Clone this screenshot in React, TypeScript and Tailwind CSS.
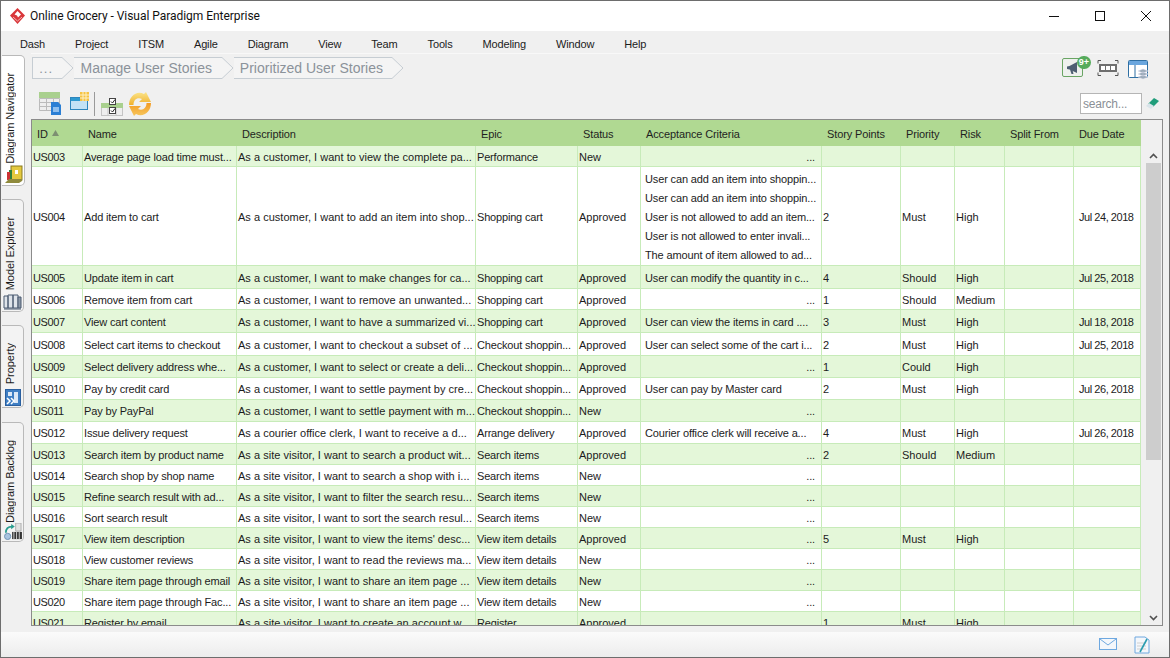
const cols = "grid grid-cols-[51px_154px_239px_102px_63px_181px_79px_54px_50px_69px_67px]"

const headers = ["ID", "Name", "Description", "Epic", "Status", "Acceptance Criteria", "Story Points", "Priority", "Risk", "Split From", "Due Date"]

type Story = {
  id: string
  name: string
  desc: string
  epic: string
  status: string
  ac: string[]
  points?: string
  priority?: string
  risk?: string
  due?: string
  h: string
}

const stories: Story[] = [
  { id: "US003", name: "Average page load time must...", desc: "As a customer, I want to view the complete pa...", epic: "Performance", status: "New", ac: [], h: "h-[21px]" },
  {
    id: "US004", name: "Add item to cart", desc: "As a customer, I want to add an item into shop...", epic: "Shopping cart", status: "Approved",
    ac: ["User can add an item into shoppin...", "User can add an item into shoppin...", "User is not allowed to add an item...", "User is not allowed to enter invali...", "The amount of item allowed to ad..."],
    points: "2", priority: "Must", risk: "High", due: "Jul 24, 2018", h: "h-[99px]",
  },
  { id: "US005", name: "Update item in cart", desc: "As a customer, I want to make changes for ca...", epic: "Shopping cart", status: "Approved", ac: ["User can modify the quantity in c..."], points: "4", priority: "Should", risk: "High", due: "Jul 25, 2018", h: "h-[23px]" },
  { id: "US006", name: "Remove item from cart", desc: "As a customer, I want to remove an unwanted...", epic: "Shopping cart", status: "Approved", ac: [], points: "1", priority: "Should", risk: "Medium", h: "h-[21px]" },
  { id: "US007", name: "View cart content", desc: "As a customer, I want to have a summarized vi...", epic: "Shopping cart", status: "Approved", ac: ["User can view the items in card ...."], points: "3", priority: "Must", risk: "High", due: "Jul 18, 2018", h: "h-[23px]" },
  { id: "US008", name: "Select cart items to checkout", desc: "As a customer, I want to checkout a subset of ...", epic: "Checkout shoppin...", status: "Approved", ac: ["User can select some of the cart i..."], points: "2", priority: "Must", risk: "High", due: "Jul 25, 2018", h: "h-[23px]" },
  { id: "US009", name: "Select delivery address whe...", desc: "As a customer, I want to select or create a deli...", epic: "Checkout shoppin...", status: "Approved", ac: [], points: "1", priority: "Could", risk: "High", h: "h-[22px]" },
  { id: "US010", name: "Pay by credit card", desc: "As a customer, I want to settle payment by cre...", epic: "Checkout shoppin...", status: "Approved", ac: ["User can pay by Master card"], points: "2", priority: "Must", risk: "High", due: "Jul 26, 2018", h: "h-[22px]" },
  { id: "US011", name: "Pay by PayPal", desc: "As a customer, I want to settle payment with m...", epic: "Checkout shoppin...", status: "New", ac: [], h: "h-[22px]" },
  { id: "US012", name: "Issue delivery request", desc: "As a courier office clerk, I want to receive a d...", epic: "Arrange delivery", status: "Approved", ac: ["Courier office clerk will receive a..."], points: "4", priority: "Must", risk: "High", due: "Jul 26, 2018", h: "h-[22px]" },
  { id: "US013", name: "Search item by product name", desc: "As a site visitor, I want to search a product wit...", epic: "Search items", status: "Approved", ac: [], points: "2", priority: "Should", risk: "Medium", h: "h-[21px]" },
  { id: "US014", name: "Search shop by shop name", desc: "As a site visitor, I want to search a shop with i...", epic: "Search items", status: "New", ac: [], h: "h-[21px]" },
  { id: "US015", name: "Refine search result with ad...", desc: "As a site visitor, I want to filter the search resu...", epic: "Search items", status: "New", ac: [], h: "h-[21px]" },
  { id: "US016", name: "Sort search result", desc: "As a site visitor, I want to sort the search resul...", epic: "Search items", status: "New", ac: [], h: "h-[21px]" },
  { id: "US017", name: "View item description", desc: "As a site visitor, I want to view the items' desc...", epic: "View item details", status: "Approved", ac: [], points: "5", priority: "Must", risk: "High", h: "h-[21px]" },
  { id: "US018", name: "View customer reviews", desc: "As a site visitor, I want to read the reviews ma...", epic: "View item details", status: "New", ac: [], h: "h-[21px]" },
  { id: "US019", name: "Share item page through email", desc: "As a site visitor, I want to share an item page ...", epic: "View item details", status: "New", ac: [], h: "h-[21px]" },
  { id: "US020", name: "Share item page through Fac...", desc: "As a site visitor, I want to share an item page ...", epic: "View item details", status: "New", ac: [], h: "h-[21px]" },
  { id: "US021", name: "Register by email", desc: "As a site visitor, I want to create an account w...", epic: "Register", status: "Approved", ac: [], points: "1", priority: "Must", risk: "High", h: "h-[21px]" },
]

const cell = "flex items-center overflow-hidden whitespace-nowrap border-r border-b border-[#c7ebb9] pl-[1px] pt-[2px]"

function Chevron() {
  return (
    <svg width="13" height="22" viewBox="0 0 13 22" className="shrink-0">
      <path d="M0 .5 L1 .5 L12 11 L1 21.5 L0 21.5 Z" fill="#f4f4f4" stroke="none" />
      <path d="M0 .5 L1 .5 L12 11 L1 21.5 L0 21.5" fill="none" stroke="#c6cdd3" />
    </svg>
  )
}

function RailTab({ label, h, active, children }: { label: string; h: string; active?: boolean; children: React.ReactNode }) {
  return (
    <div className={`${h} ${active ? "w-[23px] bg-white" : "w-[22px] bg-[#f3f3f3]"} flex flex-col items-center justify-between rounded-r-[5px] border border-l-0 border-[#b9b9b9] pt-[17px] pb-[1px]`}>
      <span className="mr-[6px] rotate-180 whitespace-nowrap text-[11px] leading-[14px] tracking-[-0.05px] text-[#1a1a1a] [writing-mode:vertical-rl]">{label}</span>
      {children}
    </div>
  )
}

export default function App() {
  return (
    <div className="flex h-[658px] w-[1170px] flex-col overflow-hidden border border-[#6d6d6d] bg-[#f0f0f0] font-['Liberation_Sans',sans-serif] text-[11px] text-[#1c1c1c]">
      {/* title bar */}
      <div className="flex h-[30px] shrink-0 items-center bg-white pl-[9px]">
        <svg width="15" height="16" viewBox="0 0 15 16">
          <path d="M7.5 0 L15 7.5 L7.5 16 L0 7.5 Z" fill="#d9363a" />
          <path d="M7.5 3 L11 6.5 L8 9.5 L7 7.5 L4.5 6.5 Z" fill="#fff" />
          <path d="M3 9 L7.5 13 L12 9" fill="none" stroke="#f3b5b5" strokeWidth="1" />
        </svg>
        <span className="ml-[5px] font-['Roboto',sans-serif] text-[12px] tracking-[-0.04px] text-[#111]">Online Grocery - Visual Paradigm Enterprise</span>
        <div className="ml-auto flex items-center">
          <svg width="46" height="12" viewBox="0 0 46 12">
            <path d="M18 6.5 H28" stroke="#111" />
          </svg>
          <svg width="46" height="12" viewBox="0 0 46 12">
            <rect x="18.5" y="1.5" width="9" height="9" fill="none" stroke="#111" />
          </svg>
          <svg width="46" height="12" viewBox="0 0 46 12">
            <path d="M18 1 L28 11 M28 1 L18 11" stroke="#111" />
          </svg>
        </div>
      </div>

      {/* menu bar */}
      <div className="flex h-[22px] shrink-0 items-center gap-[30px] pl-[19px] pt-[4px] tracking-[-0.15px]">
        {["Dash", "Project", "ITSM", "Agile", "Diagram", "View", "Team", "Tools", "Modeling", "Window", "Help"].map((m) => (
          <span key={m}>{m}</span>
        ))}
      </div>

      <div className="flex min-h-0 flex-1">
        {/* left rail */}
        <div className="flex w-[30px] shrink-0 flex-col pt-[2px] pl-[1px]">
          <RailTab label="Diagram Navigator" h="h-[131px]" active>
            <svg width="19" height="19" viewBox="0 0 19 19">
              <rect x="7" y="1" width="11" height="14" fill="#e4c93f" stroke="#8a7a20" />
              <rect x="11" y="5" width="3" height="4" fill="#fff" />
              <rect x="5" y="5" width="3" height="10" fill="#2f7f3a" />
              <rect x="3" y="7" width="3" height="8" fill="#c33" />
              <path d="M1 18 L5 14 H18 V16 L15 18 Z" fill="#8f8a3c" />
            </svg>
          </RailTab>
          <div className="mt-[13px]">
            <RailTab label="Model Explorer" h="h-[113px]">
              <svg width="19" height="17" viewBox="0 0 19 17">
                <path d="M1 3 H5 V15 H1 Z M5 2 H10 V15 H5 Z M10 2 H15 V15 H10 Z" fill="#dfe4ea" stroke="#4a5a70" />
                <path d="M15 4 H18 V15 H15 Z" fill="#8d99a8" stroke="#4a5a70" />
                <path d="M1 16 H18" stroke="#4a5a70" />
              </svg>
            </RailTab>
          </div>
          <div className="mt-[13px]">
            <RailTab label="Property" h="h-[83px]">
              <svg width="16" height="17" viewBox="0 0 16 17">
                <rect x=".5" y=".5" width="15" height="16" fill="#3f7fc4" stroke="#2a5f9f" />
                <rect x="3" y="3" width="4" height="4" fill="#dce9f7" />
                <rect x="9" y="3" width="4" height="11" fill="#dce9f7" />
                <path d="M2 9 L5 12 L2 15 M6 9 L9 12 L6 15" fill="none" stroke="#fff" strokeWidth="1.5" />
              </svg>
            </RailTab>
          </div>
          <div className="mt-[14px]">
            <RailTab label="Diagram Backlog" h="h-[120px]">
              <svg width="20" height="19" viewBox="0 0 20 19">
                <path d="M13 0 H19 V9 H13 Z" fill="#e2e2e2" stroke="#a8a8a8" />
                <path d="M9 10 H20 V18 H9 Z" fill="#333" />
                <path d="M11 10 V18 M14 10 V18 M17 10 V18" stroke="#ddd" />
                <path d="M2 11 C2 6 5 4 9 4" fill="none" stroke="#2a9d8f" strokeWidth="2" />
                <path d="M8 1 L12 4 L8 7 Z" fill="#2a9d8f" />
                <circle cx="4" cy="15" r="3.5" fill="#a8c4e0" stroke="#6b8db0" />
              </svg>
            </RailTab>
          </div>
        </div>

        {/* content */}
        <div className="flex min-w-0 flex-1 flex-col border-t border-[#f8f8f8] pr-[6px]">
          <div className="flex h-[34px] shrink-0 items-start justify-between pt-[3px] pl-[1px]">
            <div className="flex">
              <div className="flex h-[22px]">
                <div className="flex w-[29px] items-end justify-end border-y border-l border-[#c6cdd3] bg-[#f4f4f4] pr-[8px] pb-[2px] text-[13px] leading-[14px] tracking-[1px] text-[#8b929a]">...</div>
                <Chevron />
              </div>
              <div className="flex h-[22px]">
                <div className="flex w-[147px] items-center justify-end border-y border-[#c6cdd3] bg-[#f4f4f4] pr-[9px] text-[14px] text-[#8b929a]">Manage User Stories</div>
                <Chevron />
              </div>
              <div className="flex h-[22px]">
                <div className="flex w-[157px] items-center justify-end border-y border-[#c6cdd3] bg-[#f4f4f4] pr-[8px] text-[14px] text-[#8b929a]">Prioritized User Stories</div>
                <Chevron />
              </div>
            </div>
            <div className="flex items-start pr-[14px] pt-[1px]">
              <div className="relative">
                <div className="flex h-[19px] w-[21px] items-center justify-center rounded-[2px] border border-[#6aa564] bg-[#eef1ee]">
                  <svg width="14" height="14" viewBox="0 0 14 14">
                    <path d="M1 5.5 L3.5 5 L11 1 V12 L3.5 8.5 L1 8 Z" fill="#4e5f73" />
                    <path d="M4 8.5 L5.5 13 H7.5 L6.5 9 Z" fill="#4e5f73" />
                  </svg>
                </div>
                <span className="absolute -top-[2px] -right-[8px] flex h-[13px] w-[14px] items-center justify-center rounded-full bg-[#56ab5c] text-[9px] font-bold text-white">9+</span>
              </div>
              <svg width="22" height="16" viewBox="0 0 22 16" className="mt-[2px] ml-[14px]">
                <path d="M1 3.5 V.5 H4 M18 .5 H21 V3.5 M1 12.5 V15.5 H4 M18 15.5 H21 V12.5" fill="none" stroke="#555" />
                <rect x="2" y="4" width="18" height="8" fill="#6f6f6f" />
                <rect x="4" y="6" width="4" height="4" fill="#fff" />
                <rect x="9" y="6" width="4" height="4" fill="#fff" />
                <rect x="14" y="6" width="4" height="4" fill="#fff" />
              </svg>
              <svg width="21" height="20" viewBox="0 0 21 20" className="mt-[2px] ml-[9px]">
                <rect x=".5" y=".5" width="19" height="17" rx="1" fill="#fff" stroke="#2f6fa3" />
                <rect x="1" y="1" width="18" height="4" fill="#6aa6de" />
                <path d="M7 5 V18" stroke="#2f6fa3" />
                <path d="M10 11 L15 9 L20 11 L15 13 Z M10 14 L15 12 L20 14 L15 16 Z M10 17 L15 15 L20 17 L15 19 Z" fill="#9aa9b8" stroke="#dde" strokeWidth=".5" />
              </svg>
            </div>
          </div>

          {/* toolbar */}
          <div className="flex h-[31px] shrink-0 items-start pt-[3px] pl-[8px]">
            <svg width="23" height="24" viewBox="0 0 23 24" className="mt-[1px]">
              <rect x="0" y="0" width="21" height="6" fill="#a9d08e" />
              <path d="M.5 6.5 H20.5 V18.5 H.5 Z M.5 10.5 H20.5 M.5 14.5 H20.5 M7.5 6.5 V18.5 M14.5 6.5 V18.5" fill="#eee" stroke="#bbb" />
              <path d="M12 10 H19 L22 13 V23 H12 Z" fill="#2b7fd4" />
              <rect x="14" y="15" width="6" height="5" fill="#8fbfee" />
            </svg>
            <svg width="20" height="19" viewBox="0 0 20 19" className="mt-[1px] ml-[8px]">
              <rect x=".5" y="5.5" width="17" height="12" fill="#c4e2f5" stroke="#2f86bd" />
              <rect x="1" y="6" width="16" height="3" fill="#2f9ad0" />
              <rect x="10" y="0" width="9" height="9" fill="#f6c344" />
              <path d="M13 0 V9 M16 0 V9 M10 3 H19 M10 6 H19" stroke="#fdf0c4" />
            </svg>
            <div className="mt-[1px] ml-[4px] h-[24px] w-px bg-[#9a9a9a]" />
            <svg width="22" height="18" viewBox="0 0 22 18" className="mt-[7px] ml-[6px]">
              <rect x=".5" y="5.5" width="21" height="12" fill="#eee" stroke="#c4c4c4" />
              <rect x="0" y="5" width="22" height="5" fill="#a9d08e" />
              <path d="M7 10 V18 M15 10 V18" stroke="#c4c4c4" />
              <rect x="8.5" y=".5" width="6" height="6" fill="#fff" stroke="#444" />
              <rect x="8.5" y="9.5" width="6" height="6" fill="#fff" stroke="#444" />
              <path d="M10 3.5 L11.5 5 L14 1.5 M10 12.5 L11.5 14 L14 10.5" fill="none" stroke="#222" />
            </svg>
            <svg width="22" height="24" viewBox="0 0 22 24" className="mt-[1px] ml-[6px]">
              <defs>
                <linearGradient id="refreshTop" x1="0" y1="0" x2="0" y2="1">
                  <stop offset="0" stopColor="#fbe58a" />
                  <stop offset="1" stopColor="#f0b02c" />
                </linearGradient>
                <linearGradient id="refreshBottom" x1="0" y1="0" x2="0" y2="1">
                  <stop offset="0" stopColor="#f39a22" />
                  <stop offset="1" stopColor="#f6c75e" />
                </linearGradient>
              </defs>
              <path d="M0 13 C0 4 8 -2 15 2 L17 0 L22 10 L10 10 L13 7 C8 5 4.5 8 4.5 13 Z" fill="url(#refreshTop)" />
              <path d="M22 11 C22 20 14 26 7 22 L5 24 L0 14 L12 14 L9 17 C14 19 17.5 16 17.5 11 Z" fill="url(#refreshBottom)" />
            </svg>
            <div className="ml-auto flex items-start">
              <div className="mt-[2px] flex h-[21px] w-[62px] items-center border border-[#b5b5b5] bg-white pl-[2px] text-[12px] tracking-[-0.2px] text-[#8a8f96]">search...</div>
              <svg width="13" height="13" viewBox="0 0 13 13" className="mt-[6px] mr-[4px] ml-[4px]">
                <path d="M2 7 L8 1 L13 4 L7 10 Z" fill="#1f9d7a" />
                <path d="M0 9 L3 6 L8 9 L5 12 Z" fill="#d9e4ea" />
              </svg>
            </div>
          </div>

          {/* story table */}
          <div className="flex h-[507px] shrink-0 overflow-hidden border border-[#8b8b8b] bg-[#f0f0f0]">
            <div className="w-[1109px] shrink-0">
              <div className={`${cols} h-[26px] bg-[#b0d992] text-[#1f1f1f]`}>
                {headers.map((h) => (
                  <div key={h} className="flex items-center gap-[4px] pl-[5px] pt-[2px] tracking-[-0.12px] whitespace-nowrap">
                    {h}
                    {h === "ID" && (
                      <svg width="7" height="6" viewBox="0 0 7 6" className="-mt-[2px]">
                        <path d="M3.5 0 L7 6 H0 Z" fill="#7d8f72" />
                      </svg>
                    )}
                  </div>
                ))}
              </div>
              {stories.map((s, i) => (
                <div key={s.id} className={`${cols} ${s.h} ${i % 2 === 0 ? "bg-[#e4f7d9]" : "bg-white"}`}>
                  <div className={`${cell} tracking-[-0.4px]`}>{s.id}</div>
                  <div className={`${cell} tracking-[-0.15px]`}>{s.name}</div>
                  <div className={`${cell} tracking-[0.02px]`}>{s.desc}</div>
                  <div className={`${cell} tracking-[-0.18px]`}>{s.epic}</div>
                  <div className={cell}>{s.status}</div>
                  <div className={`${cell} tracking-[-0.14px] ${s.ac.length ? "pl-[4px]" : "justify-end pr-[6px]"}`}>
                    {s.ac.length ? (
                      <div className="flex flex-col leading-[19px]">
                        {s.ac.map((line, j) => (
                          <span key={j}>{line}</span>
                        ))}
                      </div>
                    ) : (
                      "..."
                    )}
                  </div>
                  <div className={cell}>{s.points}</div>
                  <div className={cell}>{s.priority}</div>
                  <div className={cell}>{s.risk}</div>
                  <div className={cell} />
                  <div className={`${cell} pl-[5px] tracking-[-0.45px]`}>{s.due}</div>
                </div>
              ))}
            </div>
            {/* scrollbar */}
            <div className="ml-[5px] flex w-[15px] flex-col items-center bg-[#f0f0f0] pt-[31px]">
              <svg width="9" height="6" viewBox="0 0 9 6" className="my-[2px]">
                <path d="M1 5 L4.5 1.5 L8 5" fill="none" stroke="#505050" strokeWidth="1.6" />
              </svg>
              <div className="mt-[2px] h-[297px] w-full shrink-0 bg-[#cdcdcd]" />
              <svg width="9" height="6" viewBox="0 0 9 6" className="mt-[155px]">
                <path d="M1 1 L4.5 4.5 L8 1" fill="none" stroke="#505050" strokeWidth="1.6" />
              </svg>
            </div>
          </div>

          <div className="flex-1" />
        </div>
      </div>

      {/* status bar */}
      <div className="flex h-[25px] shrink-0 items-center justify-end gap-[17px] bg-gradient-to-b from-[#fbfbfb] to-[#ececec] pr-[19px]">
        <svg width="18" height="13" viewBox="0 0 18 13">
          <rect x=".5" y=".5" width="17" height="11" fill="#f4f7fb" stroke="#6ea8e0" />
          <path d="M1 1 L9 7 L17 1" fill="none" stroke="#6ea8e0" />
        </svg>
        <svg width="16" height="18" viewBox="0 0 16 18">
          <path d="M1 1 H11 L15 4 V17 H1 Z" fill="#f4f7fb" stroke="#6ea8e0" />
          <path d="M3 7 H12 M3 10 H12 M3 13 H12" stroke="#cfcfcf" />
          <path d="M6 16 L13 3" stroke="#2a9db0" strokeWidth="1.6" />
        </svg>
      </div>
    </div>
  )
}
